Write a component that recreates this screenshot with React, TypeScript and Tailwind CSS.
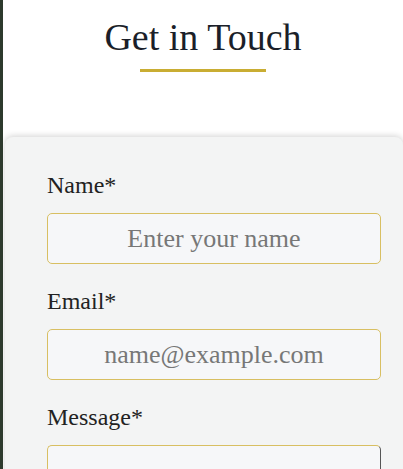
export default function App() {
  return (
    <div className="min-h-screen bg-white border-l-[3px] border-[#2d3a2d] overflow-hidden" style={{ fontFamily: '"Liberation Serif", "Times New Roman", serif' }}>
      <div className="flex flex-col items-center pt-[18px]">
        <h1 className="text-[38px] leading-none text-[#1b1f29]">Get in Touch</h1>
        <div className="mt-[13px] h-[3px] w-[126px] bg-[#c9ad33]" />
      </div>

      <div className="mt-[65px] ml-[2px] rounded-t-[8px] bg-[#f3f4f4] pl-[42px] pr-[22px] pt-[36px] pb-10 shadow-[0_-1px_6px_rgba(0,0,0,0.18)]">
        <form className="flex flex-col">
          <label className="text-[24px] leading-none text-[#222]">Name*</label>
          <input
            type="text"
            placeholder="Enter your name"
            className="mt-4 h-[51px] w-full rounded-[5px] border border-[#d8bf62] bg-[#f6f7f9] text-center text-[26px] text-[#333] placeholder:text-[#777] outline-none"
          />

          <label className="mt-[25px] text-[24px] leading-none text-[#222]">Email*</label>
          <input
            type="email"
            placeholder="name@example.com"
            className="mt-4 h-[51px] w-full rounded-[5px] border border-[#d8bf62] bg-[#f6f7f9] text-center text-[26px] text-[#333] placeholder:text-[#777] outline-none"
          />

          <label className="mt-[25px] text-[24px] leading-none text-[#222]">Message*</label>
          <textarea
            className="mt-4 h-[120px] w-full resize-none rounded-[5px] border border-[#d8bf62] border-r-[#555] bg-[#f6f7f9] text-[26px] outline-none"
          />
        </form>
      </div>
    </div>
  );
}
